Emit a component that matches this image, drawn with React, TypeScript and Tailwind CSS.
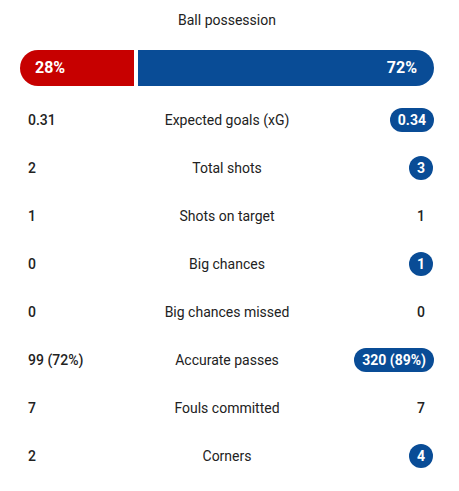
import React from "react";

type Row = { label: string; home: string; away: string; awayBadge?: "pill" | "circle" };

const rows: Row[] = [
  { label: "Expected goals (xG)", home: "0.31", away: "0.34", awayBadge: "pill" },
  { label: "Total shots", home: "2", away: "3", awayBadge: "circle" },
  { label: "Shots on target", home: "1", away: "1" },
  { label: "Big chances", home: "0", away: "1", awayBadge: "circle" },
  { label: "Big chances missed", home: "0", away: "0" },
  { label: "Accurate passes", home: "99 (72%)", away: "320 (89%)", awayBadge: "pill" },
  { label: "Fouls committed", home: "7", away: "7" },
  { label: "Corners", home: "2", away: "4", awayBadge: "circle" },
];

export default function App() {
  return (
    <div
      className="w-[459px] h-[491px] bg-white text-[#222222] overflow-hidden"
      style={{ fontFamily: "Roboto, 'Noto Sans', sans-serif" }}
    >
      <div className="ml-[20px] w-[414px] pt-[10px]">
        <div className="h-[20px] flex items-center justify-center text-[14px] leading-[20px]">
          Ball possession
        </div>
        <div className="mt-[20px] h-[36px] flex gap-[4px]">
          <div className="w-[114px] bg-[#c70000] rounded-l-full flex items-center pl-[15px] text-white font-bold text-[16px]">
            28%
          </div>
          <div className="flex-1 bg-[#094c96] rounded-r-full flex items-center justify-end pr-[17px] text-white font-bold text-[16px]">
            72%
          </div>
        </div>
        <div className="mt-[10px] flex flex-col">
          {rows.map((r) => (
            <div key={r.label} className="h-[48px] grid grid-cols-[1fr_auto_1fr] items-center text-[14px]">
              <div className="pl-[8px] font-medium">{r.home}</div>
              <div className="text-center">{r.label}</div>
              <div className="flex justify-end font-medium">
                {r.awayBadge === "pill" ? (
                  <span className="h-[24px] px-[8px] rounded-full bg-[#094c96] text-white font-bold flex items-center">
                    {r.away}
                  </span>
                ) : r.awayBadge === "circle" ? (
                  <span className="w-[24px] h-[24px] rounded-full bg-[#094c96] text-white font-bold flex items-center justify-center mr-[1px]">
                    {r.away}
                  </span>
                ) : (
                  <span className="pr-[9px]">{r.away}</span>
                )}
              </div>
            </div>
          ))}
        </div>
      </div>
    </div>
  );
}
